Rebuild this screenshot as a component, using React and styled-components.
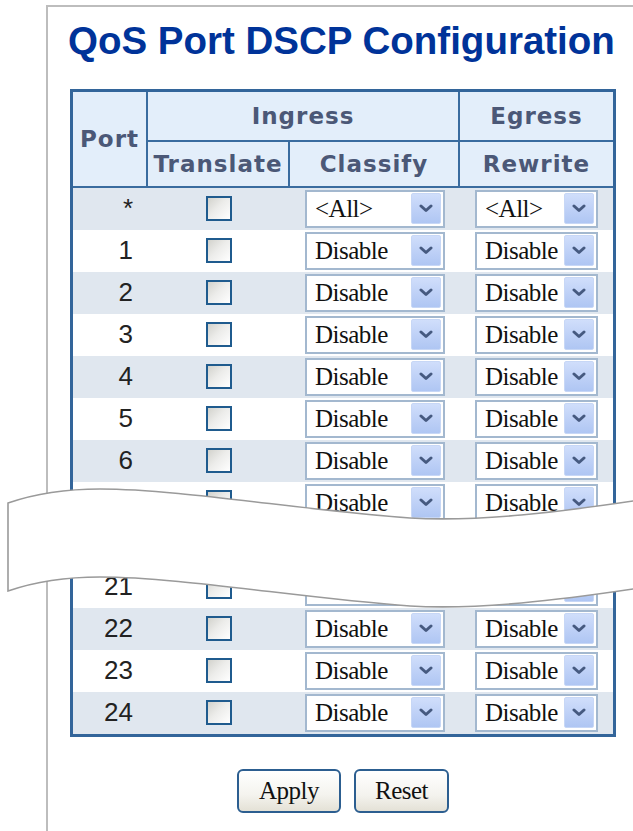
import React from 'react';
import styled, { createGlobalStyle } from 'styled-components';

const Global = createGlobalStyle`
  html, body { margin: 0; padding: 0; background: #fff; }
  body { width: 633px; height: 831px; overflow: hidden; font-family: "Liberation Sans", Arial, sans-serif; }
`;

const Page = styled.div`
  position: relative;
  height: 831px;
  padding-top: 5px;
  box-sizing: border-box;
`;

const Frame = styled.div`
  margin-left: 46px;
  height: 100%;
  box-sizing: border-box;
  border-left: 2px solid #bdbdbd;
  border-top: 2px solid #bdbdbd;
  padding: 15px 0 0 22px;
`;

const Title = styled.h1`
  margin: 0 0 28px -2px;
  font-family: "Liberation Sans", Arial, sans-serif;
  font-weight: 700;
  font-size: 38.5px;
  line-height: 38.5px;
  color: #003399;
  white-space: nowrap;
`;

const Table = styled.table`
  width: 546px;
  table-layout: fixed;
  border-collapse: separate;
  border-spacing: 0;
  border: 3px solid #33659a;
`;

const HeadRow = styled.tr`
  height: ${(p) => p.$h}px;
`;

const HeadCell = styled.th`
  padding: 0;
  background: #e3eefa;
  color: #4b5877;
  font-family: "DejaVu Sans", Verdana, sans-serif;
  font-weight: 700;
  font-size: 23px;
  letter-spacing: 1px;
  text-align: center;
  vertical-align: middle;
  border-right: ${(p) => (p.$right ? '2px solid #3a6c9f' : 'none')};
  border-bottom: ${(p) => (p.$bottom ? '2px solid #3a6c9f' : 'none')};
`;

const Row = styled.tr`
  height: 42px;
  background: ${(p) => (p.$alt ? '#e0e7ef' : '#ffffff')};
`;

const PortCell = styled.td`
  padding: 0 15px 0 0;
  text-align: right;
  vertical-align: middle;
  font-family: "Liberation Sans", Tahoma, sans-serif;
  font-size: 26px;
  color: #222;
`;

const Cell = styled.td`
  padding: 0;
  vertical-align: middle;
  text-align: center;
`;

const Check = styled.span`
  display: inline-block;
  width: 26px;
  height: 25px;
  box-sizing: border-box;
  border: 2px solid #1f5b8e;
  background: linear-gradient(135deg, #d2d2cc 0%, #ececea 45%, #ffffff 100%);
  vertical-align: middle;
`;

const SelectBox = styled.div`
  display: inline-flex;
  align-items: center;
  width: ${(p) => p.$w}px;
  height: 38px;
  box-sizing: border-box;
  border: 2px solid #a3b8cf;
  background: #fff;
  padding: 0 2px 0 8px;
  vertical-align: middle;
  text-align: left;
`;

const SelectText = styled.span`
  flex: 1;
  font-family: "Liberation Serif", "Times New Roman", serif;
  font-size: 25px;
  color: #111;
  white-space: nowrap;
  overflow: hidden;
  letter-spacing: -0.5px;
`;

const ArrowBtn = styled.span`
  display: flex;
  align-items: center;
  justify-content: center;
  width: 30px;
  height: 31px;
  box-sizing: border-box;
  border: 1px solid #c7d7f6;
  border-radius: 2px;
  background: linear-gradient(180deg, #d0defb 0%, #bccff6 60%, #afc6f3 100%);
`;

const ButtonBar = styled.div`
  width: 546px;
  display: flex;
  justify-content: center;
  gap: 13px;
  margin-top: 32px;
`;

const Button = styled.button`
  height: 44px;
  padding: 0 ${(p) => p.$pad}px;
  box-sizing: border-box;
  border: 2px solid #2c5e90;
  border-radius: 6px;
  background: linear-gradient(180deg, #ffffff 0%, #f4f3ee 60%, #e4e1d6 100%);
  font-family: "Liberation Serif", "Times New Roman", serif;
  font-size: 25px;
  color: #111;
  letter-spacing: -0.5px;
`;

const Break = styled.svg`
  position: absolute;
  left: 0;
  top: 470px;
  width: 633px;
  height: 160px;
  pointer-events: none;
`;

const Chevron = () => (
  <svg width="14" height="9" viewBox="0 0 14 9">
    <path d="M2 2 L7 6.5 L12 2" fill="none" stroke="#465a80" strokeWidth="3" strokeLinecap="round" strokeLinejoin="round" />
  </svg>
);

const Select = ({ value, w }) => (
  <SelectBox $w={w}>
    <SelectText>{value}</SelectText>
    <ArrowBtn><Chevron /></ArrowBtn>
  </SelectBox>
);

const rows = [
  { port: '*', value: '<All>' },
  ...[1, 2, 3, 4, 5, 6, 7, 20, 21, 22, 23, 24].map((n) => ({ port: String(n), value: 'Disable' })),
];

export default function App() {
  return (
    <>
      <Global />
      <Page>
        <Frame>
          <Title>QoS Port DSCP Configuration</Title>
          <Table>
            <colgroup>
              <col style={{ width: 75 }} />
              <col style={{ width: 142 }} />
              <col style={{ width: 170 }} />
              <col style={{ width: 153 }} />
            </colgroup>
            <thead>
              <HeadRow $h={50}>
                <HeadCell rowSpan={2} $right $bottom>Port</HeadCell>
                <HeadCell colSpan={2} $right $bottom>Ingress</HeadCell>
                <HeadCell $bottom>Egress</HeadCell>
              </HeadRow>
              <HeadRow $h={46}>
                <HeadCell $right $bottom>Translate</HeadCell>
                <HeadCell $right $bottom>Classify</HeadCell>
                <HeadCell $bottom>Rewrite</HeadCell>
              </HeadRow>
            </thead>
            <tbody>
              {rows.map((r, i) => (
                <Row key={r.port} $alt={i % 2 === 0}>
                  <PortCell>{r.port}</PortCell>
                  <Cell><Check /></Cell>
                  <Cell><Select value={r.value} w={140} /></Cell>
                  <Cell><Select value={r.value} w={123} /></Cell>
                </Row>
              ))}
            </tbody>
          </Table>
          <ButtonBar>
            <Button $pad={20}>Apply</Button>
            <Button $pad={19}>Reset</Button>
          </ButtonBar>
        </Frame>
        <Break viewBox="0 470 633 160">
          <path
            d="M 8 503 C 40 492, 70 489, 100 489 C 180 489, 300 510, 410 518 C 480 522, 560 512, 640 500 L 640 588 C 560 600, 480 610, 410 606 C 300 598, 180 577, 100 577 C 70 577, 40 580, 8 591 Z"
            fill="#ffffff"
            stroke="#9a9a9a"
            strokeWidth="1.6"
          />
        </Break>
      </Page>
    </>
  );
}
